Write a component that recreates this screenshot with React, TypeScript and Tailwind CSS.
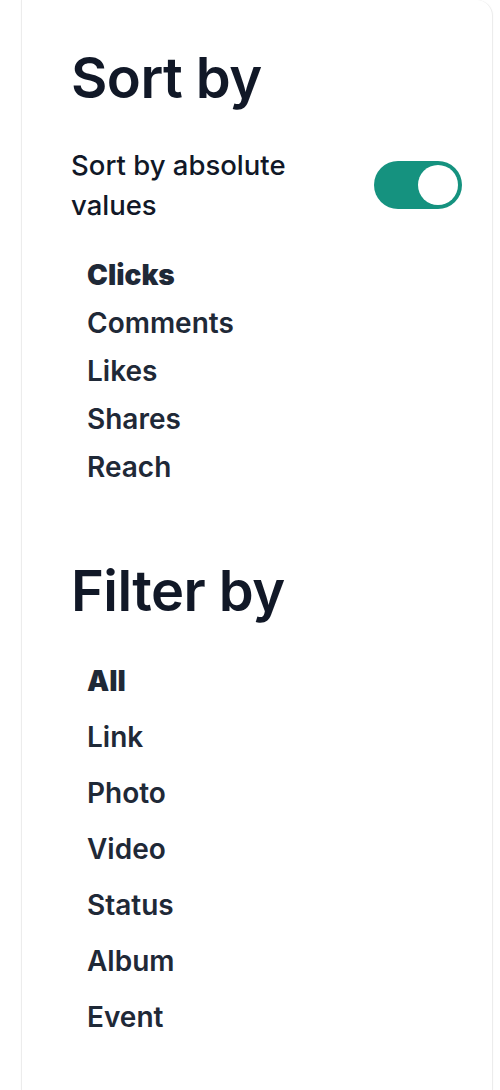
import { useState } from "react";

const SORTS = ["Clicks", "Comments", "Likes", "Shares", "Reach"];
const FILTERS = ["All", "Link", "Photo", "Video", "Status", "Album", "Event"];

export default function App() {
  const [absolute, setAbsolute] = useState(true);
  const [sort, setSort] = useState("Clicks");
  const [filter, setFilter] = useState("All");

  return (
    <div className="min-h-[1090px] bg-white font-['Inter','Liberation_Sans',sans-serif]">
      <aside className="ml-[21px] h-[1090px] w-[472px] rounded-tr-2xl border-x border-[#ececec] bg-white pl-[49px] pr-[30px] pt-[50px] shadow-[0_0_2px_rgba(0,0,0,0.04)]">
        <h2 className="text-[56px] font-semibold leading-none tracking-[-0.01em] text-[#111827]">
          Sort by
        </h2>

        <div className="mt-[39px] flex items-center justify-between">
          <span className="w-[240px] text-[27.5px] font-medium leading-[40px] text-[#111827]">
            Sort by absolute values
          </span>
          <button
            type="button"
            role="switch"
            aria-checked={absolute}
            onClick={() => setAbsolute((a) => !a)}
            className={`flex h-[48px] w-[88px] items-center rounded-full p-[4px] ${
              absolute ? "bg-[#15927f]" : "bg-gray-300"
            }`}
          >
            <span
              className={`h-[40px] w-[40px] rounded-full bg-white transition-transform ${
                absolute ? "translate-x-[40px]" : "translate-x-0"
              }`}
            />
          </button>
        </div>

        <ul className="mt-[26px] pl-[16px]">
          {SORTS.map((s) => (
            <li key={s}>
              <button
                type="button"
                onClick={() => setSort(s)}
                className={`text-[28px] leading-[48px] text-[#1f2937] ${
                  sort === s ? "font-black" : "font-semibold"
                }`}
              >
                {s}
              </button>
            </li>
          ))}
        </ul>

        <h2 className="mt-[72px] text-[56px] font-semibold leading-none tracking-[-0.01em] text-[#111827]">
          Filter by
        </h2>

        <ul className="mt-[34px] pl-[16px]">
          {FILTERS.map((f) => (
            <li key={f}>
              <button
                type="button"
                onClick={() => setFilter(f)}
                className={`text-[28px] leading-[56px] text-[#1f2937] ${
                  filter === f ? "font-black" : "font-semibold"
                }`}
              >
                {f}
              </button>
            </li>
          ))}
        </ul>
      </aside>
    </div>
  );
}
